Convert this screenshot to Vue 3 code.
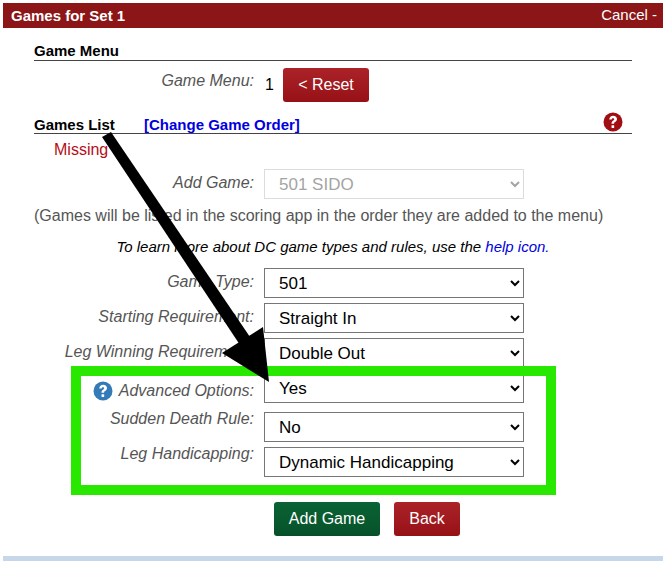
<script setup>
const mainRows = [
  { label: 'Game Type:', value: '501' },
  { label: 'Starting Requirement:', value: 'Straight In' },
  { label: 'Leg Winning Requirement:', value: 'Double Out' }
]
const advRows = [
  { label: 'Sudden Death Rule:', value: 'No' },
  { label: 'Leg Handicapping:', value: 'Dynamic Handicapping' }
]
</script>

<template>
  <div class="page">
    <header class="bar">
      <span class="bar-title">Games for Set 1</span>
      <span class="bar-cancel">Cancel -</span>
    </header>

    <main class="content">
      <h2 class="heading first">Game Menu</h2>
      <div class="menu-row">
        <span class="label menu-label">Game Menu:</span>
        <span class="menu-value">1</span>
        <button class="btn red reset">&lt; Reset</button>
      </div>

      <h2 class="heading list">
        <span class="list-title">Games List</span>
        <a class="order-link">[Change Game Order]</a>
        <svg class="help-red" viewBox="0 0 20 20" width="20" height="20">
          <circle cx="10" cy="10" r="9.5" fill="#a00d12" />
          <path d="M6.2 7.5c.2-2.300 1.800-3.700 3.900-3.700 2.300 0 3.900 1.400 3.900 3.300 0 1.500-.8 2.300-1.900 3-.8.500-1 .8-1 1.700H8.500c0-1.600.4-2.300 1.500-3 .9-.6 1.200-.9 1.200-1.500 0-.7-.5-1.100-1.200-1.100-.8 0-1.200.5-1.300 1.300z" fill="#fff" />
          <rect x="8.500" y="13.200" width="2.700" height="2.700" rx=".4" fill="#fff" />
        </svg>
      </h2>

      <div class="missing">Missing</div>

      <div class="row add-row">
        <label class="label">Add Game:</label>
        <select class="sel" disabled><option>501 SIDO</option></select>
      </div>

      <p class="note">(Games will be listed in the scoring app in the order they are added to the menu)</p>
      <p class="learn">To learn more about DC game types and rules, use the <a class="help-link">help icon.</a></p>

      <div class="rows">
        <div v-for="r in mainRows" :key="r.label" class="row">
          <label class="label">{{ r.label }}</label>
          <select class="sel"><option>{{ r.value }}</option></select>
        </div>
        <div class="row">
          <label class="label adv-label">
            <svg class="help-blue" viewBox="0 0 20 20" width="20" height="20">
              <circle cx="10" cy="10" r="9.5" fill="#337ab7" />
              <path d="M6.2 7.5c.2-2.300 1.800-3.700 3.900-3.700 2.300 0 3.900 1.400 3.900 3.300 0 1.500-.8 2.300-1.900 3-.8.500-1 .8-1 1.700H8.500c0-1.600.4-2.300 1.500-3 .9-.6 1.200-.9 1.200-1.500 0-.7-.5-1.100-1.200-1.100-.8 0-1.200.5-1.300 1.300z" fill="#fff" />
              <rect x="8.500" y="13.200" width="2.700" height="2.700" rx=".4" fill="#fff" />
            </svg>
            Advanced Options:
          </label>
          <select class="sel"><option>Yes</option></select>
        </div>
      </div>

      <div class="rows adv-rows">
        <div v-for="r in advRows" :key="r.label" class="row">
          <label class="label tight">{{ r.label }}</label>
          <select class="sel"><option>{{ r.value }}</option></select>
        </div>
      </div>

      <div class="actions">
        <button class="btn green add">Add Game</button>
        <button class="btn red back">Back</button>
      </div>
    </main>

    <footer class="foot"></footer>

    <div class="highlight"></div>
    <svg class="arrow" width="663" height="561" viewBox="0 0 663 561">
      <polygon points="102,137 111,132 250,337 240,345" fill="#000" />
      <polygon points="263,327 269,382 222,353" fill="#000" />
    </svg>
  </div>
</template>

<style>
html, body { margin: 0; background: #fff; }
</style>

<style scoped>
.page {
  position: relative;
  width: 663px;
  height: 561px;
  overflow: hidden;
  background: #fff;
  font-family: "Liberation Sans", Arial, sans-serif;
  font-size: 16px;
  color: #000;
  display: flex;
  flex-direction: column;
  box-sizing: border-box;
  padding: 3px 0 0 3px;
}
.bar {
  height: 25px;
  flex: none;
  background: #8b1517;
  color: #fff;
  display: flex;
  justify-content: space-between;
  align-items: center;
  padding: 0 6px 0 8px;
}
.bar-title { font-weight: bold; font-size: 15px; }
.bar-cancel { font-size: 15px; margin-top: -2px; }
.content {
  flex: 1;
  width: 598px;
  margin-left: 31px;
}
.heading {
  margin: 0;
  font-size: 15px;
  line-height: 16px;
  font-weight: bold;
  border-bottom: 1px solid #444;
  padding-bottom: 1px;
}
.first { margin-top: 15px; }
.list {
  margin-top: 14px;
  padding-top: 1px;
  padding-bottom: 0;
  display: flex;
  align-items: center;
  position: relative;
}
.list-title { width: 110px; }
.order-link { color: #0000e0; }
.help-red { position: absolute; left: 569px; top: -4px; }
.menu-row {
  display: flex;
  align-items: flex-start;
  margin-top: 7px;
  height: 34px;
}
.label {
  width: 220px;
  flex: none;
  text-align: right;
  font-style: italic;
  color: #555;
  line-height: 18px;
  margin-right: 10px;
  padding-top: 5px;
  white-space: nowrap;
}
.menu-label { padding-top: 4px; margin-right: 11px; }
.menu-value { width: 18px; line-height: 18px; padding-top: 8px; }
.btn {
  border: none;
  border-radius: 3px;
  color: #fff;
  font: 16px "Liberation Sans", Arial, sans-serif;
  padding: 0;
  height: 34px;
}
.red { background: linear-gradient(#ab2328, #961116); }
.green { background: linear-gradient(#0a6334, #07512a); }
.reset { width: 86px; }
.missing {
  color: #b50d16;
  line-height: 18px;
  margin: 7px 0 0 20px;
}
.row {
  display: flex;
  align-items: flex-start;
  height: 30px;
}
.add-row { margin-top: 10px; }
.sel {
  width: 260px;
  height: 30px;
  box-sizing: border-box;
  border: 1px solid #767676;
  border-radius: 0;
  background: #fff;
  color: #000;
  font: 17px "Liberation Sans", Arial, sans-serif;
  padding: 0 0 0 10px;
  margin: 0;
}
.sel:disabled { border-color: #dcdcdc; color: #a4a4a4; background: #fff; opacity: 1; }
.note {
  margin: 8px 0 0;
  line-height: 18px;
  color: #555;
}
.learn {
  margin: 13px 0 0;
  line-height: 18px;
  font-size: 15px;
  font-style: italic;
  text-align: center;
}
.help-link { color: #0000e0; }
.rows { display: flex; flex-direction: column; gap: 5px; margin-top: 12px; }
.adv-rows { margin-top: 9px; }
.label.adv-label {
  display: flex;
  justify-content: flex-end;
  align-items: center;
  gap: 6px;
  padding-top: 8px;
}
.label.tight { padding-top: 1px; line-height: 12px; }
.help-blue { flex: none; }
.actions {
  display: flex;
  gap: 14px;
  margin: 25px 0 0 240px;
}
.add { width: 106px; }
.back { width: 66px; }
.foot {
  height: 5px;
  flex: none;
  background: #c5d7e8;
}
.highlight {
  position: absolute;
  left: 71px;
  top: 366px;
  width: 485px;
  height: 129px;
  box-sizing: border-box;
  border: 10px solid #28e800;
  pointer-events: none;
}
.arrow {
  position: absolute;
  left: 0;
  top: 0;
  pointer-events: none;
}
</style>
